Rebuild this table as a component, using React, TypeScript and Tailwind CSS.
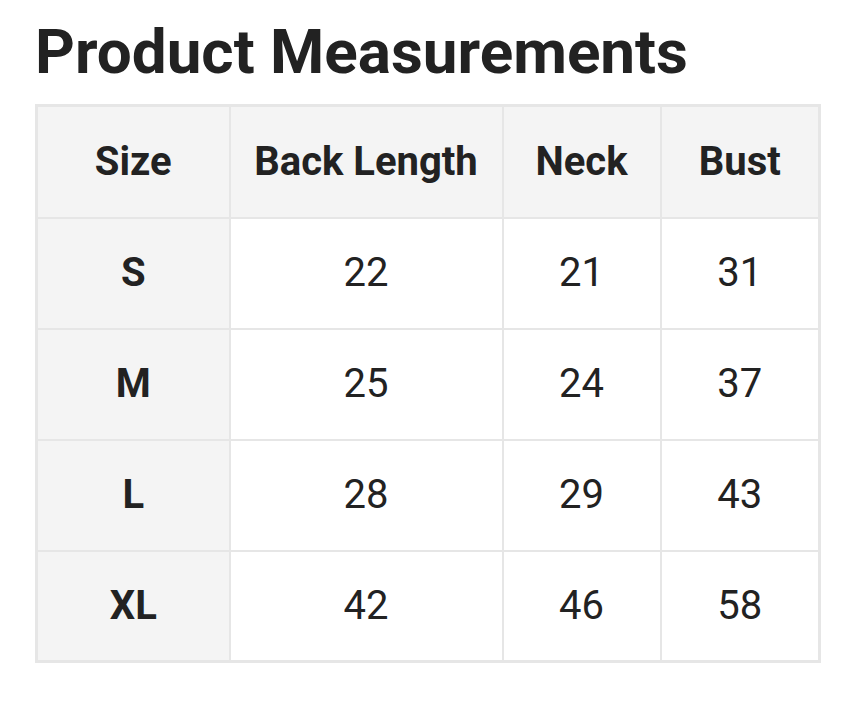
import React from "react";

const rows = [
  { size: "S", back: 22, neck: 21, bust: 31 },
  { size: "M", back: 25, neck: 24, bust: 37 },
  { size: "L", back: 28, neck: 29, bust: 43 },
  { size: "XL", back: 42, neck: 46, bust: 58 },
];

export default function App() {
  return (
    <div
      className="min-h-screen bg-white px-[35px] pt-[13px] text-[#222222]"
      style={{ fontFamily: "Roboto, 'Liberation Sans', sans-serif" }}
    >
      <h1 className="text-[62px] font-bold leading-[77px]">Product Measurements</h1>
      <table className="mt-[14px] w-[783px] table-fixed border-collapse border-[3px] border-[#e6e6e6] text-center text-[40px]">
        <colgroup>
          <col className="w-[193px]" />
          <col className="w-[273px]" />
          <col className="w-[158px]" />
          <col className="w-[159px]" />
        </colgroup>
        <thead>
          <tr className="h-[112px] bg-[#f4f4f4]">
            <th className="border-2 border-[#e6e6e6] font-bold">Size</th>
            <th className="border-2 border-[#e6e6e6] font-bold">Back Length</th>
            <th className="border-2 border-[#e6e6e6] font-bold">Neck</th>
            <th className="border-2 border-[#e6e6e6] font-bold">Bust</th>
          </tr>
        </thead>
        <tbody>
          {rows.map((r) => (
            <tr key={r.size} className="h-[111px]">
              <td className="border-2 border-[#e6e6e6] bg-[#f4f4f4] font-bold">{r.size}</td>
              <td className="border-2 border-[#e6e6e6]">{r.back}</td>
              <td className="border-2 border-[#e6e6e6]">{r.neck}</td>
              <td className="border-2 border-[#e6e6e6]">{r.bust}</td>
            </tr>
          ))}
        </tbody>
      </table>
    </div>
  );
}
